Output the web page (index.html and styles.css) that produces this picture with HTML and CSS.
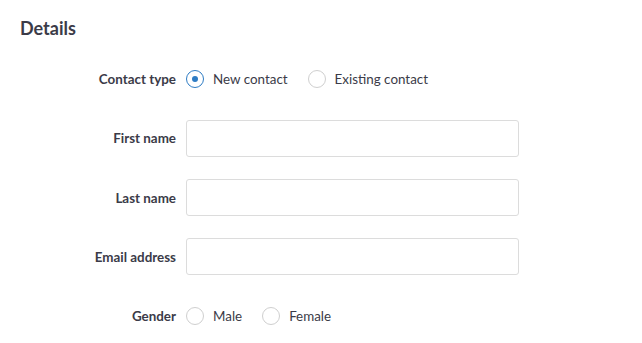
FILE: index.html
```html
<!DOCTYPE html>
<html lang="en">
<head>
  <meta charset="UTF-8">
  <meta name="viewport" content="width=device-width, initial-scale=1.0">
  <title>Details</title>
  <link rel="stylesheet" href="styles.css">
</head>
<body>

<h2 class="title">Details</h2>

<form class="form">
  <div class="row">
    <span class="label">Contact type</span>
    <div class="choices">
      <label class="choice"><input type="radio" name="type" checked><span class="dot"></span>New contact</label>
      <label class="choice"><input type="radio" name="type"><span class="dot"></span>Existing contact</label>
    </div>
  </div>

  <div class="row">
    <label class="label" for="first">First name</label>
    <input class="field" type="text" id="first">
  </div>

  <div class="row">
    <label class="label" for="last">Last name</label>
    <input class="field" type="text" id="last">
  </div>

  <div class="row">
    <label class="label" for="email">Email address</label>
    <input class="field" type="email" id="email">
  </div>

  <div class="row">
    <span class="label">Gender</span>
    <div class="choices">
      <label class="choice"><input type="radio" name="gender"><span class="dot"></span>Male</label>
      <label class="choice"><input type="radio" name="gender"><span class="dot"></span>Female</label>
    </div>
  </div>
</form>

</body>
</html>
```

FILE: styles.css
```css
body {
  margin: 0;
  font-family: Lato, "Open Sans", sans-serif;
  color: #3b3b48;
  background: #fff;
}
.title {
  margin: 17px 0 0 20px;
  font-size: 18px;
  font-weight: bold;
  line-height: 22px;
}
.form {
  display: flex;
  flex-direction: column;
  gap: 22.3px;
  margin-top: 21.5px;
}
.row {
  display: grid;
  grid-template-columns: 176px 333px;
  column-gap: 10px;
  align-items: center;
  min-height: 37px;
}
.label {
  text-align: right;
  font-size: 13.4px;
  font-weight: bold;
}
.field {
  box-sizing: border-box;
  height: 37px;
  border: 1px solid #dcdcdc;
  border-radius: 3px;
  font: inherit;
  padding: 0 10px;
}
.choices {
  display: flex;
  gap: 20px;
}
.choice {
  display: flex;
  align-items: center;
  gap: 9px;
  font-size: 13.4px;
}
.choice input {
  display: none;
}
.dot {
  box-sizing: border-box;
  width: 18px;
  height: 18px;
  border: 1px solid #cfcfcf;
  border-radius: 50%;
  display: flex;
  align-items: center;
  justify-content: center;
}
.choice input:checked + .dot {
  border-color: #2e7cc4;
}
.choice input:checked + .dot::after {
  content: "";
  width: 6px;
  height: 6px;
  border-radius: 50%;
  background: #2e7cc4;
}
```
